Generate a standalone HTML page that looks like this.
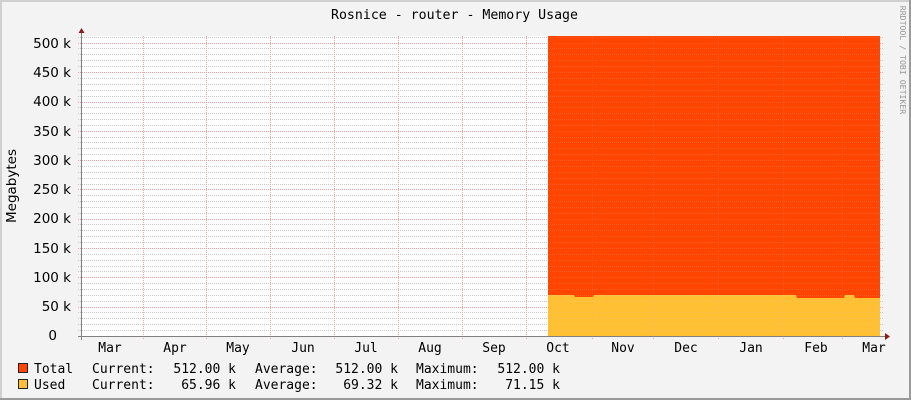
<!DOCTYPE html>
<html><head><meta charset="utf-8"><style>
html,body{margin:0;padding:0;background:#f3f3f3;}
svg{display:block;}
.m{font-family:"DejaVu Sans Mono","Liberation Mono",monospace;font-size:13px;fill:#000;}
.s{font-family:"DejaVu Sans","Liberation Sans",sans-serif;font-size:13.5px;fill:#000;}
</style></head><body>
<svg width="911" height="400" viewBox="0 0 911 400" xmlns="http://www.w3.org/2000/svg">
<rect x="0" y="0" width="911" height="400" fill="#f3f3f3"/>
<rect x="0" y="0" width="911" height="2" fill="#d0d0d0"/>
<rect x="0" y="0" width="2" height="400" fill="#d0d0d0"/>
<rect x="909" y="0" width="2" height="400" fill="#9a9a9a"/>
<rect x="0" y="398" width="911" height="2" fill="#9a9a9a"/>

<rect x="81" y="36" width="799" height="300" fill="#ffffff"/>

<g id="grid">
<g stroke="#c8c8c8" stroke-width="1" stroke-dasharray="1,1">
<path d="M78 330.5H883M78 324.5H883M78 318.5H883M78 312.5H883M78 301.5H883M78 295.5H883M78 289.5H883M78 283.5H883M78 271.5H883M78 266.5H883M78 260.5H883M78 254.5H883M78 242.5H883M78 236.5H883M78 230.5H883M78 224.5H883M78 213.5H883M78 207.5H883M78 201.5H883M78 195.5H883M78 184.5H883M78 178.5H883M78 172.5H883M78 166.5H883M78 154.5H883M78 148.5H883M78 142.5H883M78 137.5H883M78 125.5H883M78 119.5H883M78 113.5H883M78 107.5H883M78 96.5H883M78 90.5H883M78 84.5H883M78 78.5H883M78 66.5H883M78 60.5H883M78 54.5H883M78 48.5H883M78 37.5H883"/>
</g>
<g stroke="#f2a0a0" stroke-width="1" stroke-dasharray="1,1">
<path d="M78 307.5H883M78 277.5H883M78 248.5H883M78 219.5H883M78 189.5H883M78 160.5H883M78 131.5H883M78 102.5H883M78 72.5H883M78 43.5H883"/>
<path d="M143.5 36V339M206.5 36V339M270.5 36V339M334.5 36V339M398.5 36V339M462.5 36V339M526.5 36V339M592.5 36V339M653.5 36V339M718.5 36V339M783.5 36V339M842.5 36V339"/>
</g>
</g>

<rect x="548" y="36" width="332" height="300" fill="#ff4500"/>
<polygon fill="#ffc133" points="548,336 548,295 574,295 575,297 593,297 594,295 796,295 797,298 844,298 845,295 854,295 855,298 880,298 880,336"/>
<use href="#grid" opacity="0.18"/>

<line x1="78" y1="336.5" x2="885" y2="336.5" stroke="#808080"/>
<line x1="81.5" y1="340" x2="81.5" y2="32" stroke="#808080"/>
<polygon points="885,333 890,336.5 885,340" fill="#8b1a1a"/>
<polygon points="78.5,33 81.5,28 84.5,33" fill="#8b1a1a"/>

<text class="m" x="454.5" y="19" text-anchor="middle" textLength="247" lengthAdjust="spacingAndGlyphs">Rosnice - router - Memory Usage</text>

<g class="s" text-anchor="end">
<text x="71" y="48">500 k</text><text x="71" y="77">450 k</text><text x="71" y="106">400 k</text>
<text x="71" y="136">350 k</text><text x="71" y="165">300 k</text><text x="71" y="194">250 k</text>
<text x="71" y="223">200 k</text><text x="71" y="253">150 k</text><text x="71" y="282">100 k</text>
<text x="71" y="311">50 k</text><text x="57" y="340">0</text>
</g>
<text class="s" transform="translate(16,186) rotate(-90)" text-anchor="middle">Megabytes</text>
<text transform="translate(900,60) rotate(90)" text-anchor="middle" font-family="DejaVu Sans Mono,monospace" font-size="8.2" fill="#999">RRDTOOL / TOBI OETIKER</text>

<g class="m" text-anchor="middle">
<text x="110" y="352">Mar</text><text x="175" y="352">Apr</text><text x="238" y="352">May</text>
<text x="303" y="352">Jun</text><text x="366" y="352">Jul</text><text x="430" y="352">Aug</text>
<text x="494" y="352">Sep</text><text x="558" y="352">Oct</text><text x="623" y="352">Nov</text>
<text x="686" y="352">Dec</text><text x="751" y="352">Jan</text><text x="816" y="352">Feb</text>
<text x="874" y="352">Mar</text>
</g>

<rect x="18.5" y="363.5" width="9" height="9" fill="#ff4500" stroke="#222"/>
<rect x="18.5" y="379.5" width="9" height="9" fill="#ffc133" stroke="#222"/>
<g class="m">
<text x="34" y="373">Total</text><text x="92" y="373">Current:</text>
<text x="236" y="373" text-anchor="end">512.00 k</text>
<text x="255" y="373">Average:</text>
<text x="398" y="373" text-anchor="end">512.00 k</text>
<text x="416" y="373">Maximum:</text>
<text x="560" y="373" text-anchor="end">512.00 k</text>
<text x="34" y="389">Used</text><text x="92" y="389">Current:</text>
<text x="236" y="389" text-anchor="end">65.96 k</text>
<text x="255" y="389">Average:</text>
<text x="398" y="389" text-anchor="end">69.32 k</text>
<text x="416" y="389">Maximum:</text>
<text x="560" y="389" text-anchor="end">71.15 k</text>
</g>
</svg>
</body></html>
